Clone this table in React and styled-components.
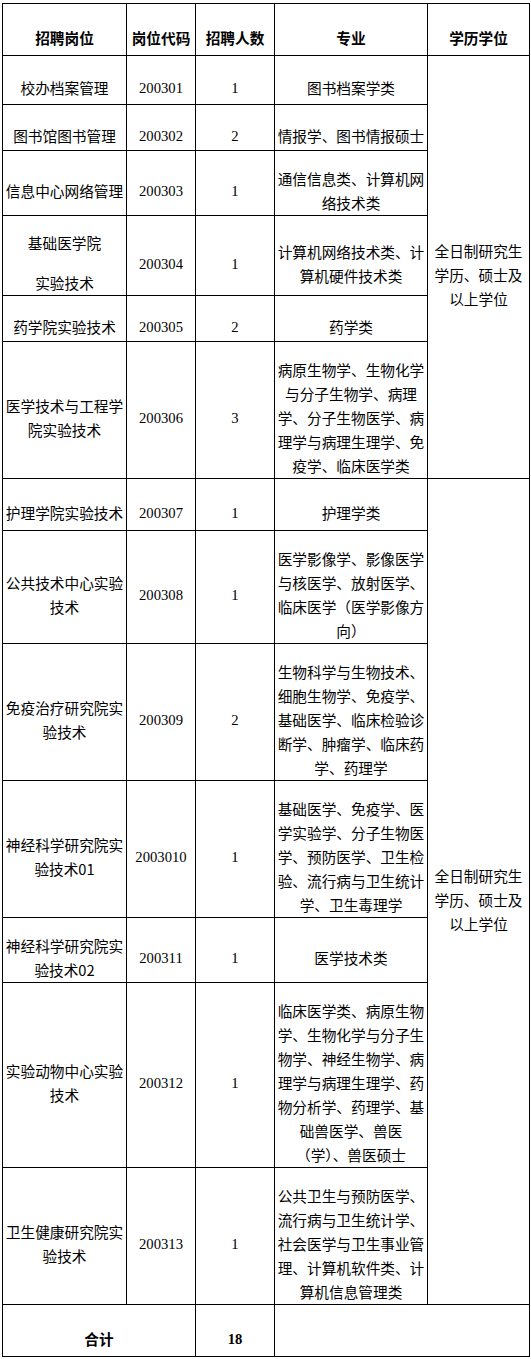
import React from 'react'
import styled, { createGlobalStyle } from 'styled-components'

const GlobalStyle = createGlobalStyle`
  html, body {
    margin: 0;
    padding: 0;
    background: #fff;
  }
  body {
    font-family: "Noto Sans CJK SC", sans-serif;
    color: #000;
  }
`

const Page = styled.div`
  padding: 3px 0 0 2px;
  width: 531px;
  box-sizing: border-box;
`

const Table = styled.table`
  width: 527px;
  table-layout: fixed;
  border-collapse: collapse;
  font-size: 14.67px;
  line-height: 24px;
`

const Row = styled.tr`
  height: ${p => p.$h}px;
`

const Cell = styled.td`
  border: 1px solid #000;
  padding: ${p => (p.$pt != null ? p.$pt : 16)}px 2px 0;
  text-align: center;
  vertical-align: middle;
  font-family: ${p => (p.$serif ? '"Liberation Serif", serif' : '"Noto Sans CJK SC", sans-serif')};
  font-weight: ${p => (p.$bold ? 700 : 400)};
  word-break: break-all;
  overflow: hidden;
`

const HeadCell = styled(Cell).attrs({ as: 'th' })`
  font-weight: 700;
`

const Para = styled.div`
  margin-top: ${p => p.$gap || 0}px;
`

const degree = ['全日制研究生', '学历、硕士及', '以上学位']

const rows = [
  { post: '校办档案管理', code: '200301', num: '1', major: '图书档案学类', h: 49, degree: 6 },
  { post: '图书馆图书管理', code: '200302', num: '2', major: '情报学、图书情报硕士', h: 46 },
  { post: '信息中心网络管理', code: '200303', num: '1', major: '通信信息类、计算机网络技术类', h: 65 },
  { post: ['基础医学院', '实验技术'], code: '200304', num: '1', major: '计算机网络技术类、计算机硬件技术类', h: 80 },
  { post: '药学院实验技术', code: '200305', num: '2', major: '药学类', h: 46 },
  { post: '医学技术与工程学院实验技术', code: '200306', num: '3', major: '病原生物学、生物化学与分子生物学、病理学、分子生物医学、病理学与病理生理学、免疫学、临床医学类', h: 137 },
  { post: '护理学院实验技术', code: '200307', num: '1', major: '护理学类', h: 52, degree: 7 },
  { post: '公共技术中心实验技术', code: '200308', num: '1', major: '医学影像学、影像医学与核医学、放射医学、临床医学（医学影像方向）', h: 113 },
  { post: '免疫治疗研究院实验技术', code: '200309', num: '2', major: '生物科学与生物技术、细胞生物学、免疫学、基础医学、临床检验诊断学、肿瘤学、临床药学、药理学', h: 137 },
  { post: '神经科学研究院实验技术01', code: '2003010', num: '1', major: '基础医学、免疫学、医学实验学、分子生物医学、预防医学、卫生检验、流行病与卫生统计学、卫生毒理学', h: 137 },
  { post: '神经科学研究院实验技术02', code: '200311', num: '1', major: '医学技术类', h: 65 },
  { post: '实验动物中心实验技术', code: '200312', num: '1', major: '临床医学类、病原生物学、生物化学与分子生物学、神经生物学、病理学与病理生理学、药物分析学、药理学、基础兽医学、兽医（学）、兽医硕士', h: 185 },
  { post: '卫生健康研究院实验技术', code: '200313', num: '1', major: '公共卫生与预防医学、流行病与卫生统计学、社会医学与卫生事业管理、计算机软件类、计算机信息管理类', h: 137 },
]

const PostCell = ({ post }) =>
  Array.isArray(post) ? (
    <Cell $pt={15}>
      <Para>{post[0]}</Para>
      <Para $gap={16}>{post[1]}</Para>
    </Cell>
  ) : (
    <Cell>{post}</Cell>
  )

export default function App() {
  return (
    <Page>
      <GlobalStyle />
      <Table>
        <colgroup>
          <col style={{ width: 124 }} />
          <col style={{ width: 69 }} />
          <col style={{ width: 79 }} />
          <col style={{ width: 153 }} />
          <col style={{ width: 102 }} />
        </colgroup>
        <tbody>
          <Row $h={52}>
            <HeadCell>招聘岗位</HeadCell>
            <HeadCell>岗位代码</HeadCell>
            <HeadCell>招聘人数</HeadCell>
            <HeadCell>专业</HeadCell>
            <HeadCell>学历学位</HeadCell>
          </Row>
          {rows.map((r, i) => (
            <Row key={i} $h={r.h}>
              <PostCell post={r.post} />
              <Cell $serif>{r.code}</Cell>
              <Cell $serif>{r.num}</Cell>
              <Cell>{r.major}</Cell>
              {r.degree && (
                <Cell rowSpan={r.degree}>
                  {degree.map(d => <Para key={d}>{d}</Para>)}
                </Cell>
              )}
            </Row>
          ))}
          <Row $h={52}>
            <Cell colSpan={2} $bold>合计</Cell>
            <Cell $serif $bold>18</Cell>
            <Cell colSpan={2}></Cell>
          </Row>
        </tbody>
      </Table>
    </Page>
  )
}
